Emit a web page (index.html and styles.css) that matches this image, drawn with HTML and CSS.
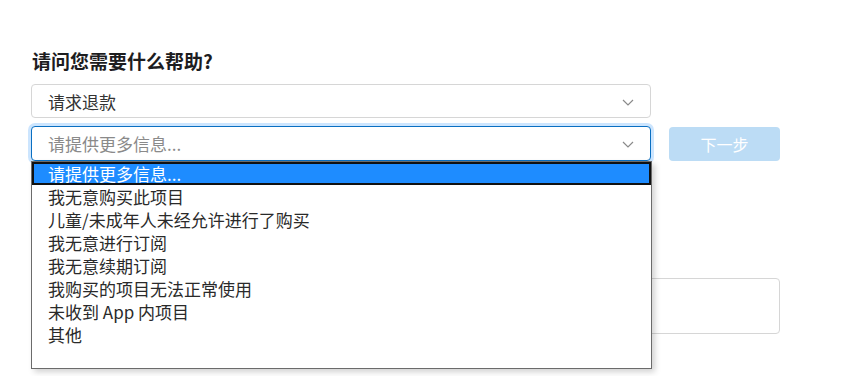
FILE: index.html
```html
<!DOCTYPE html>
<html lang="zh-CN">
<head>
    <meta charset="UTF-8">
    <meta name="viewport" content="width=device-width, initial-scale=1.0">
    <link rel="stylesheet" href="styles.css">
</head>
<body>
    <div class="page">
        <h2 class="question">请问您需要什么帮助?</h2>

        <div class="select">
            <span class="select-value">请求退款</span>
            <svg class="chevron" width="12" height="7" viewBox="0 0 12 7"><path d="M1 1l5 5 5-5" fill="none" stroke="#8a8a8a" stroke-width="1.2"/></svg>
        </div>

        <div class="row">
            <div class="select-wrap">
                <div class="select focused">
                    <span class="select-value placeholder">请提供更多信息...</span>
                    <svg class="chevron" width="12" height="7" viewBox="0 0 12 7"><path d="M1 1l5 5 5-5" fill="none" stroke="#8a8a8a" stroke-width="1.2"/></svg>
                </div>
                <!-- open native dropdown -->
                <ul class="dropdown">
                    <li class="active">请提供更多信息...</li>
                    <li>我无意购买此项目</li>
                    <li>儿童/未成年人未经允许进行了购买</li>
                    <li>我无意进行订阅</li>
                    <li>我无意续期订阅</li>
                    <li>我购买的项目无法正常使用</li>
                    <li>未收到 App 内项目</li>
                    <li>其他</li>
                </ul>
            </div>
            <button type="button" class="next-btn" disabled>下一步</button>
        </div>

        <textarea class="details"></textarea>
    </div>
</body>
</html>
```

FILE: styles.css
```css
:root {
    --text: #222;
    --muted: #8a8a8a;
    --border: #d6d6d6;
    --focus: #0a6fc2;
    --highlight: #1e8cff;
}

html, body {
    min-height: 376px;
}

body {
    margin: 0;
    background: #fff;
    font-family: "Noto Sans CJK SC", "Noto Sans", sans-serif;
    color: var(--text);
}

.page {
    width: 749px;
    padding: 48px 0 50px 31px;
}

.question {
    margin: 0 0 10px 1px;
    font-size: 19px;
    line-height: 26px;
    font-weight: bold;
    color: #1d1d1f;
}

.select {
    box-sizing: border-box;
    width: 620px;
    height: 34px;
    border: 1px solid var(--border);
    border-radius: 4px;
    display: flex;
    align-items: center;
    justify-content: space-between;
    padding: 0 16px 0 16px;
    margin-bottom: 8px;
    background: #fff;
}

.select-value {
    font-size: 17px;
    color: #333;
}

.placeholder {
    color: var(--muted);
}

.chevron {
    margin-top: 2px;
}

.focused {
    height: 35px;
    border-color: var(--focus);
    box-shadow: 0 0 0 3px rgba(0, 125, 250, 0.2);
    margin-bottom: 0;
}

.row {
    display: flex;
    gap: 18px;
    align-items: flex-start;
}

.select-wrap {
    position: relative;
}

.next-btn {
    width: 111px;
    height: 34px;
    margin-top: 1px;
    border: none;
    border-radius: 4px;
    background: #bcdcf5;
    color: #fff;
    font-family: inherit;
    font-size: 16px;
}

.dropdown {
    position: absolute;
    top: 35px;
    left: 0;
    z-index: 2;
    box-sizing: border-box;
    width: 621px;
    height: 208px;
    margin: 0;
    padding: 0;
    list-style: none;
    background: #fff;
    border: 1px solid #6b6b6b;
    box-shadow: 3px 3px 6px rgba(0, 0, 0, 0.18);
}

.dropdown li {
    padding-left: 16px;
    font-size: 17px;
    line-height: 23px;
    color: #2a2a2a;
}

.dropdown li.active {
    background: var(--highlight);
    color: #fff;
    outline: 2px solid #111;
    outline-offset: -2px;
}

.details {
    display: block;
    box-sizing: border-box;
    width: 749px;
    height: 56px;
    margin-top: 117px;
    border: 1px solid var(--border);
    border-radius: 4px;
    resize: none;
}
```
